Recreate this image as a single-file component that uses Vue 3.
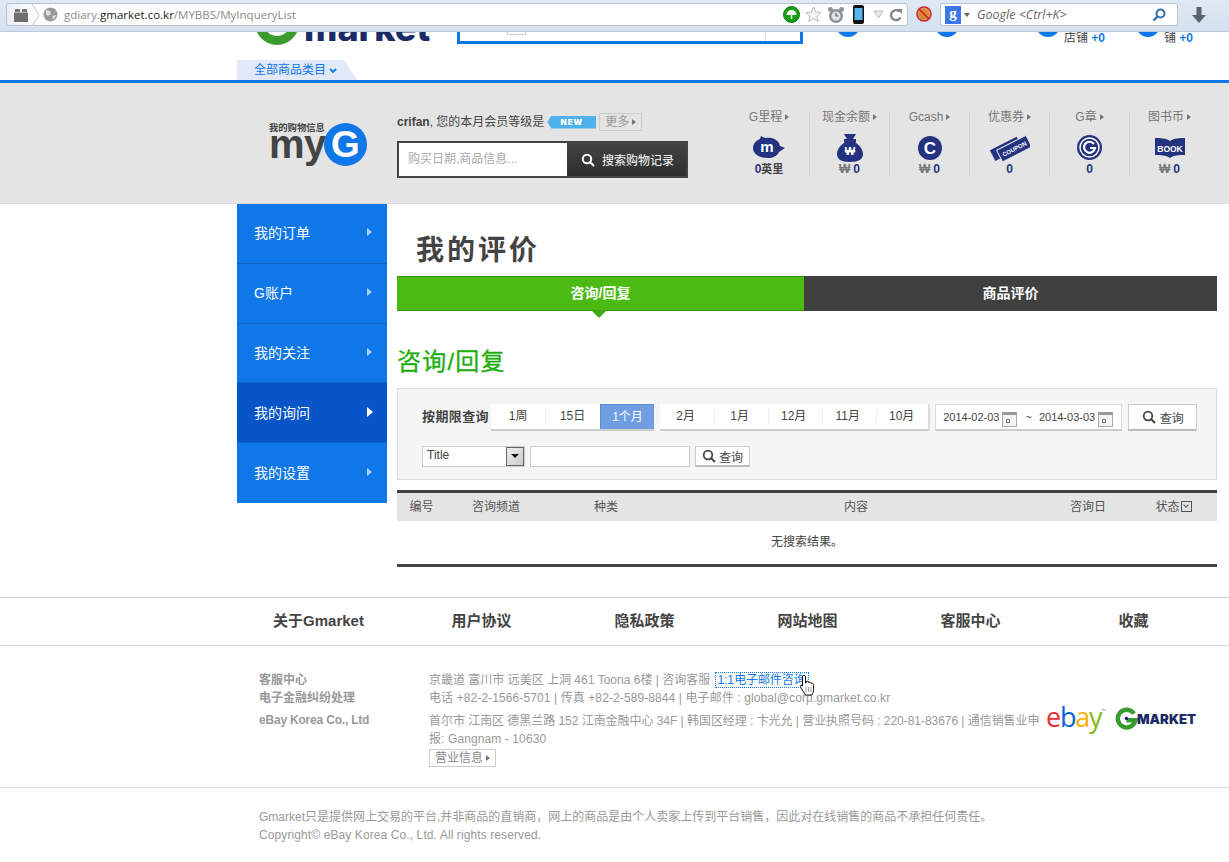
<script setup>
const menu = [
  { t: '我的订单' }, { t: 'G账户' }, { t: '我的关注' }, { t: '我的询问', on: true }, { t: '我的设置' }
]
const stats = [
  { t: 'G里程', k: 'pig', v: '0', u: '英里' },
  { t: '现金余额', k: 'bag', v: '0', p: '₩' },
  { t: 'Gcash', k: 'c', v: '0', p: '₩' },
  { t: '优惠券', k: 'coupon', v: '0' },
  { t: 'G章', k: 'g', v: '0' },
  { t: '图书币', k: 'book', v: '0', p: '₩' }
]
const links = ['关于Gmarket', '用户协议', '隐私政策', '网站地图', '客服中心', '收藏']
const p1 = ['1周', '15日', '1个月']
const p2 = ['2月', '1月', '12月', '11月', '10月']
</script>

<template>
  <div class="page">
    <div class="bar">
      <div class="url">
        <svg class="tabs" width="16" height="16" viewBox="0 0 16 16"><path d="M2 2h5v3H2zM9 2h5v3H9z" fill="#777"/><path d="M1 5.5h14V15H1z" fill="#6f6f6f"/></svg>
        <svg class="chev" width="10" height="24" viewBox="0 0 10 24"><path d="M1 1l7 11-7 11" fill="none" stroke="#c5ccd4"/></svg>
        <svg class="globe" width="15" height="15" viewBox="0 0 15 15"><circle cx="7.5" cy="7.5" r="7" fill="#9a9a9a"/><path d="M3 3l4 1 1 3-3 2-2-2zM9 9l4-1-2 5z" fill="#e0e0e0"/></svg>
        <span class="addr">gdiary.<b>gmarket.co.kr</b>/MYBBS/MyInqueryList</span>
        <span class="fill"></span>
        <svg width="17" height="17" viewBox="0 0 17 17"><circle cx="8.5" cy="8.5" r="8" fill="#16a016" stroke="#0c7a0c"/><path d="M3.5 9a5 5 0 0 1 10 0z" fill="#fff"/><path d="M8.5 9v4" stroke="#fff" stroke-width="1.5"/></svg>
        <svg class="i1" width="17" height="17" viewBox="0 0 17 17"><path d="M8.5 1l2.3 5 5.2.6-3.9 3.6 1.1 5.3-4.7-2.7-4.7 2.7L4.900 10.200 1 6.600 6.200 6z" fill="#f3f3f3" stroke="#bcbcbc"/></svg>
        <svg class="i2" width="18" height="18" viewBox="0 0 18 18"><circle cx="9" cy="10" r="7" fill="#8b949c"/><circle cx="9" cy="10" r="4.500" fill="#dfe3e6"/><path d="M9 7v3h2.500" fill="none" stroke="#5f666c" stroke-width="1.200"/><circle cx="3.500" cy="3.500" r="2.500" fill="#8b949c"/><circle cx="14.500" cy="3.500" r="2.500" fill="#8b949c"/></svg>
        <svg class="i3" width="11" height="19" viewBox="0 0 11 19"><rect width="11" height="19" rx="2" fill="#111"/><rect x="1.500" y="3" width="8" height="12" fill="#58b4ec"/></svg>
        <svg class="i4" width="11" height="9" viewBox="0 0 11 9"><path d="M1 1h9L5.500 8z" fill="#e8ebee" stroke="#b9bec3"/></svg>
        <svg class="i5" width="14" height="14" viewBox="0 0 14 14"><path d="M11.500 9.500A5 5 0 1 1 10.500 3.500" fill="none" stroke="#7d878f" stroke-width="2.400"/><path d="M8 1h5v5z" fill="#7d878f"/></svg>
      </div>
      <svg class="block" width="16" height="16" viewBox="0 0 16 16"><circle cx="8" cy="8" r="6" fill="#d98a35"/><circle cx="8" cy="8" r="7" fill="none" stroke="#cc2030" stroke-width="1.600"/><path d="M3 3l10 10" stroke="#cc2030" stroke-width="1.600"/></svg>
      <div class="search">
        <span class="gbox">g</span>
        <span class="caret"></span>
        <span class="hint">Google &lt;Ctrl+K&gt;</span>
        <span class="fill"></span>
        <svg width="14" height="14" viewBox="0 0 14 14"><circle cx="8.500" cy="5.500" r="4" fill="none" stroke="#2f6ea5" stroke-width="2"/><path d="M5.500 8.500L1.500 12.500" stroke="#2f6ea5" stroke-width="2.400"/></svg>
      </div>
      <svg class="down" width="14" height="16" viewBox="0 0 14 16"><path d="M4.500 0h5v8H14l-7 8-7-8h4.500z" fill="#5a636b"/></svg>
    </div>

    <div class="clip">
      <div class="glogo"><span class="garc"></span><span class="gword">market</span></div>
      <div class="topsearch"><span class="tsmall"></span><span class="tline"></span></div>
      <span class="dot d1"></span>
      <span class="dot d2"></span>
      <span class="dot d3"></span><span class="shop s3">店铺 <b>+0</b></span>
      <span class="dot d4"></span><span class="shop s4">铺 <b>+0</b></span>
    </div>
    <div class="catrow">
      <div class="cat">全部商品类目 <svg width="8" height="6" viewBox="0 0 8 6"><path d="M1 1l3 3 3-3" fill="none" stroke="#1077e8" stroke-width="1.800"/></svg></div>
    </div>

    <div class="band">
      <div class="mylogo">
        <span class="mysmall">我的购物信息</span>
        <div class="myword"><span>my</span><span class="myg">G</span></div>
      </div>
      <div class="userbox">
        <div class="uline">
          <b>crifan</b>, 您的本月会员等级是
          <span class="newb">NEW</span>
          <span class="more">更多<i class="tri gray"></i></span>
        </div>
        <div class="hist">
          <span class="ph">购买日期,商品信息...</span>
          <span class="hbtn">
            <svg width="14" height="14" viewBox="0 0 14 14"><circle cx="6" cy="6" r="4.200" fill="none" stroke="#fff" stroke-width="2"/><path d="M9 9l4 4" stroke="#fff" stroke-width="2.200"/></svg>
            搜索购物记录
          </span>
        </div>
      </div>
      <div class="stats">
        <div v-for="s in stats" :key="s.t" class="stat">
          <div class="st">{{ s.t }}<i class="tri gray"></i></div>
          <div class="si">
            <svg v-if="s.k === 'pig'" width="34" height="26" viewBox="0 0 34 26"><path d="M1 13c0-5 4-8 7-9l1-3 4 2c5-1 11 0 14 5l1 3 5 2-6 4c-2 4-6 6-11 6-9 0-15-4-15-10z" fill="#24337f"/><text x="15" y="17" class="svgm">m</text></svg>
            <svg v-else-if="s.k === 'bag'" width="26" height="28" viewBox="0 0 26 28"><path d="M7 0h12l-3 5h3v3h-1c4 3 8 7 8 12 0 5-4 8-13 8S0 25 0 20c0-5 4-9 8-12H7V5h3z" fill="#24337f"/><text x="13" y="21" class="svgw">₩</text></svg>
            <svg v-else-if="s.k === 'c'" width="24" height="24" viewBox="0 0 24 24"><circle cx="12" cy="12" r="12" fill="#24337f"/><text x="12" y="18" class="svgc">C</text></svg>
            <svg v-else-if="s.k === 'coupon'" width="40" height="28" viewBox="0 0 40 28"><g transform="rotate(-27 20 14)"><rect x="1" y="7" width="30" height="12" fill="#24337f"/><rect x="7" y="10" width="33" height="13" fill="#24337f" stroke="#e4e4e4"/><text x="23.500" y="19" class="svgt">COUPON</text></g></svg>
            <svg v-else-if="s.k === 'g'" width="25" height="25" viewBox="0 0 25 25"><circle cx="12.500" cy="12.500" r="12.500" fill="#24337f"/><circle cx="12.500" cy="12.500" r="9.500" fill="none" stroke="#fff" stroke-width="1.500"/><path d="M17 9a5.500 5.500 0 1 0 1 4h-5" fill="none" stroke="#fff" stroke-width="2.200"/></svg>
            <svg v-else width="30" height="22" viewBox="0 0 30 22"><path d="M0 1c5 0 11 0 15 3 4-3 10-3 15-3v17c-5 0-11 0-15 3-4-3-10-3-15-3z" fill="#24337f"/><text x="15" y="14.500" class="svgb">BOOK</text></svg>
          </div>
          <div class="sv"><span v-if="s.p" class="won">{{ s.p }}</span><b>{{ s.v }}</b><span v-if="s.u" class="unit">{{ s.u }}</span></div>
        </div>
      </div>
    </div>

    <div class="main">
      <nav class="side">
        <a v-for="m in menu" :key="m.t" class="mi" :class="{ on: m.on }">{{ m.t }}<i class="tri"></i></a>
      </nav>
      <section class="content">
        <h1>我的评价</h1>
        <div class="tabsrow">
          <div class="tab act">咨询/回复</div>
          <div class="tab">商品评价</div>
        </div>
        <h2>咨询/回复</h2>
        <div class="filter">
          <div class="frow">
            <b class="flabel">按期限查询</b>
            <div class="seg">
              <span v-for="x in p1" :key="x" class="sitem" :class="{ sel: x === '1个月' }">{{ x }}</span>
            </div>
            <div class="seg g2">
              <span v-for="x in p2" :key="x" class="sitem">{{ x }}</span>
            </div>
            <div class="dates">
              2014-02-03<i class="cal"></i><span class="til">~</span>2014-03-03<i class="cal"></i>
            </div>
            <button class="qbtn big">
              <svg width="14" height="14" viewBox="0 0 14 14"><circle cx="6" cy="6" r="4.300" fill="none" stroke="#444" stroke-width="1.800"/><path d="M9 9l4 4" stroke="#444" stroke-width="2"/></svg>
              查询
            </button>
          </div>
          <div class="frow r2">
            <div class="sel2"><span>Title</span><i class="ddb"></i></div>
            <div class="inp"></div>
            <button class="qbtn small">
              <svg width="14" height="14" viewBox="0 0 14 14"><circle cx="6" cy="6" r="4.300" fill="none" stroke="#444" stroke-width="1.800"/><path d="M9 9l4 4" stroke="#444" stroke-width="2"/></svg>
              查询
            </button>
          </div>
        </div>
        <div class="tbl">
          <div class="thead">
            <span>编号</span><span>咨询频道</span><span>种类</span><span>内容</span><span>咨询日</span>
            <span>状态<i class="chk"></i></span>
          </div>
          <div class="empty">无搜索结果。</div>
        </div>
      </section>
    </div>

    <div class="flinks">
      <a v-for="l in links" :key="l">{{ l }}</a>
    </div>
    <div class="finfo">
      <div class="fleft">
        <div class="lh18">客服中心<br>电子金融纠纷处理</div>
        <div class="co">eBay Korea Co., Ltd</div>
      </div>
      <div class="fright">
        <div class="lh18">京畿道 富川市 远美区 上洞 461 Toona 6楼 | 咨询客服 <a class="mail">1:1 电子邮件咨询</a><br><span class="wide">电话 +82-2-1566-5701 | 传真 +82-2-589-8844 | 电子邮件 : global@corp.gmarket.co.kr</span></div>
        <div class="lh18 second"><span class="tight">首尔市 江南区 德黑兰路 152 江南金融中心 34F | 韩国区经理 : 卞光允 | 营业执照号码 : 220-81-83676 | 通信销售业申</span><br><span class="wide">报: Gangnam - 10630</span></div>
        <span class="biz">营业信息<i class="tri gray"></i></span>
      </div>
      <div class="brand">
        <span class="ebay"><i class="e1">e</i><i class="e2">b</i><i class="e3">a</i><i class="e4">y</i><i class="tm">™</i></span>
        <span class="gm2">
          <svg width="23" height="23" viewBox="0 0 26 26"><path d="M21.500 7.500A10 10 0 1 0 23 15H13" fill="none" stroke="#3a9b2f" stroke-width="5"/><circle cx="13" cy="13" r="2" fill="#1b2a66"/></svg>
          <span>MARKET</span>
        </span>
      </div>
      <svg class="hand" width="16" height="23" viewBox="0 0 16 23"><path d="M5 1.500c1 0 1.500.7 1.500 1.500v6l1-.3V7.500c1.300-.5 2 0 2 1l.8-.2c1.200-.3 1.700.3 1.700 1l.8-.1c1-.1 1.700.5 1.700 1.500v5c0 2-.5 3-1.500 5.300H6.500L2 14c-1.500-2-.5-3 1-2.500l.5.700V3c0-1 .5-1.500 1.500-1.500z" fill="#fff" stroke="#111"/><path d="M7 13v5M9.500 13v5M12 13v5" stroke="#888" stroke-width=".8"/></svg>
    </div>
    <div class="fbottom">
      Gmarket只是提供网上交易的平台,并非商品的直销商，网上的商品是由个人卖家上传到平台销售，因此对在线销售的商品不承担任何责任。<br>
      <span class="wide">Copyright© eBay Korea Co., Ltd. All rights reserved.</span>
    </div>
  </div>
</template>

<style>
html, body { margin: 0; background: #fff; overflow: hidden; }
</style>

<style scoped>
.page { width: 1229px; height: 862px; overflow: hidden; position: relative; font-family: "Liberation Sans", "Noto Sans CJK SC", sans-serif; font-size: 12px; color: #444; background: #fff; }
i { font-style: normal; }
b { font-weight: bold; }
.fill { flex: 1; }

.bar { height: 32px; box-sizing: border-box; display: flex; align-items: flex-start; padding: 3px 0 0 6px; background: linear-gradient(#dfe9f4, #d5e1ef); border-bottom: 1px solid #b9c8da; }
.url { width: 902px; height: 23px; box-sizing: border-box; background: #fff; border: 1px solid #b8c4d2; border-radius: 3px; display: flex; align-items: center; padding: 0 4px 0 6px; background-image: linear-gradient(90deg, #e9eef4, #fff 32px); }
.chev { margin-left: 2px; }
.globe { margin-left: 2px; }
.addr { margin-left: 6px; font-family: "Open Sans", "Liberation Sans", sans-serif; font-size: 11.500px; color: #8a8a8a; }
.addr b { font-weight: normal; color: #222; }
.i1 { margin-left: 5px; } .i2 { margin-left: 5px; } .i3 { margin-left: 8px; } .i4 { margin-left: 9px; } .i5 { margin-left: 5px; }
.block { margin: 3px 0 0 8px; }
.search { width: 238px; height: 23px; margin-left: 8px; box-sizing: border-box; background: #fff; border: 1px solid #b8c4d2; border-radius: 3px; display: flex; align-items: center; padding: 0 11px 0 4px; }
.gbox { width: 16px; height: 18px; background: #3b78e7; color: #fff; font: bold 15px/15px "Liberation Serif", serif; text-align: center; }
.caret { width: 0; height: 0; border: 3px solid transparent; border-top: 4px solid #666; margin: 3px 0 0 3px; }
.hint { margin-left: 7px; font: italic 12.500px "Open Sans", sans-serif; color: #666; }
.down { margin: 4px 0 0 14px; }

.clip { height: 13px; overflow: hidden; display: flex; align-items: flex-end; padding-left: 255px; position: relative; }
.glogo { display: flex; align-items: flex-end; height: 60px; flex: none; width: 202px; }
.garc { width: 44px; height: 44px; box-sizing: border-box; border: 9px solid #3a9b2f; border-radius: 50%; flex: none; }
.gword { font: 800 36px/40px Inter, sans-serif; color: #1b2a66; margin: 0 0 -3px 5px; }
.topsearch { width: 346px; height: 40px; box-sizing: border-box; border: 3px solid #1077e8; margin-bottom: 1px; flex: none; position: relative; }
.tsmall { display: block; width: 19px; height: 4px; position: absolute; left: 47px; bottom: 6px; border: 1px solid #ccd; border-top: 0; box-sizing: border-box; }
.tline { position: absolute; right: 34px; top: 0; bottom: 0; width: 1px; background: #ddd; }
.dot { position: absolute; width: 24px; height: 24px; border-radius: 50%; background: #1077e8; bottom: 8px; }
.d1 { left: 836px; } .d2 { left: 935px; } .d3 { left: 1036px; } .d4 { left: 1136px; }
.shop { position: absolute; bottom: 0; font-size: 12px; line-height: 14px; color: #444; }
.shop b { color: #1077e8; font-size: 12px; }
.s3 { left: 1064px; } .s4 { left: 1164px; }

.catrow { height: 20px; margin-top: 15px; padding-left: 237px; border-bottom: 3px solid #0f77e8; }
.cat { width: 120px; height: 20px; box-sizing: border-box; background: #e1e8f8; padding-left: 17px; font-size: 12px; line-height: 20px; color: #1077e8; clip-path: polygon(0 0, 107px 0, 120px 100%, 0 100%); }

.band { height: 120px; background: #e4e4e4; border-bottom: 1px solid #ddd; display: flex; padding-left: 269px; }
.mylogo { width: 128px; padding-top: 39px; flex: none; }
.mysmall { display: block; font-size: 9.300px; line-height: 12px; font-weight: bold; color: #444; }
.myword { display: flex; align-items: center; margin-top: -10px; height: 40px; font: bold 40px/40px "Liberation Sans", sans-serif; color: #444; letter-spacing: -.5px; }
.myg { width: 43px; height: 43px; border-radius: 50%; background: #1077e8; color: #fff; font: bold 37px/43px "Liberation Sans", sans-serif; text-align: center; margin-left: -2px; flex: none; letter-spacing: 0; }
.userbox { width: 291px; flex: none; padding-top: 30px; }
.uline { height: 18px; line-height: 18px; display: flex; align-items: center; white-space: nowrap; color: #444; }
.newb { width: 49px; height: 13px; flex: none; background: #4db2ec; color: #fff; font: 900 8px/13px Inter, sans-serif; letter-spacing: 1px; text-align: center; margin-left: 3px; clip-path: polygon(0 50%, 4px 0, 100% 0, 100% 100%, 4px 100%); }
.more { width: 43px; height: 18px; flex: none; box-sizing: border-box; border: 1px solid #ccc; margin-left: 3px; color: #999; font-size: 12px; line-height: 16px; text-align: center; }
.hist { margin-top: 10px; height: 37px; box-sizing: border-box; border: 2px solid #444; display: flex; background: #fff; }
.ph { width: 168px; padding-left: 9px; box-sizing: border-box; font-size: 12px; line-height: 33px; color: #aaa; flex: none; }
.hbtn { flex: 1; background: linear-gradient(#444, #2e2e2e); color: #fff; display: flex; align-items: center; gap: 7px; padding-left: 14px; font-size: 12px; }
.stats { display: flex; width: 480px; flex: none; margin-left: 41px; padding-top: 30px; height: 63px; }
.stat { width: 80px; height: 63px; flex: none; box-sizing: border-box; border-left: 1px solid #d4d4d4; text-align: center; display: flex; flex-direction: column; align-items: center; }
.stat:first-child { border-left: 0; }
.st { font-size: 12px; line-height: 14px; margin-top: -3px; color: #777; white-space: nowrap; height: 14px; }
.si { height: 34px; display: flex; align-items: center; justify-content: center; margin-top: 9px; }
.sv { font-size: 12px; line-height: 14px; color: #24337f; }
.won { color: #777; font-weight: bold; margin-right: 3px; }
.unit { color: #444; font-weight: bold; font-size: 11px; }
.svgm { font: bold 15px "Liberation Sans", sans-serif; fill: #fff; text-anchor: middle; }
.svgw { font: bold 11px "Liberation Sans", "DejaVu Sans", sans-serif; fill: #fff; text-anchor: middle; }
.svgc { font: bold 17px "Liberation Sans", sans-serif; fill: #fff; text-anchor: middle; }
.svgt { font: bold 6px "Liberation Sans", sans-serif; fill: #fff; text-anchor: middle; }
.svgb { font: bold 8.500px "Liberation Sans", sans-serif; fill: #fff; text-anchor: middle; }
.tri { display: inline-block; width: 0; height: 0; border: 4px solid transparent; border-left: 5px solid #aecdf5; border-right: 0; vertical-align: 1px; }
.tri.gray { border-width: 3px; border-left: 4px solid #777; border-right: 0; margin-left: 3px; }

.main { height: 393px; display: flex; padding-left: 237px; }
.side { width: 150px; height: 299px; flex: none; background: #1077e8; display: flex; flex-direction: column; }
.mi { height: 60px; box-sizing: border-box; border-bottom: 1px solid #0b63c9; color: #fff; font-size: 14px; padding: 0 15px 2px 17px; display: flex; justify-content: space-between; align-items: center; }
.mi:last-child { border-bottom: 0; }
.mi.on { background: #0755c8; }
.mi.on .tri { border-width: 5px; border-left: 6px solid #fff; border-right: 0; margin-right: -1px; }
.content { width: 820px; margin-left: 10px; flex: none; }
h1 { margin: 0; padding: 31px 0 0 19px; height: 72px; box-sizing: border-box; font: bold 28px/32px "Liberation Sans", "Noto Sans CJK SC", sans-serif; letter-spacing: 3px; color: #444; }
.tabsrow { display: flex; height: 35px; }
.tab { width: 413px; box-sizing: border-box; background: #404040; color: #fff; font-size: 14px; font-weight: bold; line-height: 35px; text-align: center; }
.tab.act { width: 407px; background: #4bbb14; border: 1px solid #2d9a05; border-width: 1px 0; line-height: 33px; position: relative; }
.tab.act::after { content: ""; position: absolute; left: 194px; top: 33px; width: 0; height: 0; border: 8px solid transparent; border-top: 8px solid #3ea80f; border-bottom: 0; }
h2 { margin: 0; padding-top: 35px; height: 77px; box-sizing: border-box; font: normal 24px/32px "Liberation Sans", "Noto Sans CJK SC", sans-serif; letter-spacing: 1.200px; color: #1fae12; -webkit-text-stroke: .3px #1fae12; }
.filter { height: 92px; box-sizing: border-box; background: #f5f5f5; border: 1px solid #ddd; padding: 15px 0 0 24px; }
.frow { display: flex; height: 27px; align-items: stretch; }
.flabel { width: 69px; font-size: 13px; letter-spacing: .4px; line-height: 25px; color: #444; flex: none; white-space: nowrap; }
.seg { display: flex; background: #fff; border-bottom: 2px solid #ccc; box-sizing: border-box; flex: none; }
.g2 { margin-left: 6px; width: 270px; border-right: 2px solid #ddd; }
.sitem { width: 54.400px; flex: none; text-align: center; line-height: 25px; position: relative; color: #444; }
.g2 .sitem { width: 54px; text-indent: -3px; }
.sitem + .sitem::before { content: ""; position: absolute; left: 0; top: 5px; height: 15px; width: 1px; background: #eee; }
.sitem.sel { background: #709ee2; color: #fff; border-top: 1px solid #5f8ed6; border-left: 1px solid #5f8ed6; box-sizing: border-box; line-height: 24px; }
.sitem.sel::before { display: none; }
.dates { margin-left: 5px; width: 187px; flex: none; box-sizing: border-box; background: #fff; border: 1px solid #ddd; border-bottom: 2px solid #ccc; padding-left: 7px; display: flex; align-items: center; font-size: 11px; color: #444; white-space: nowrap; }
.til { margin: 0 7px 0 8px; }
.cal { width: 15px; height: 15px; box-sizing: border-box; border: 1px solid #aaa; border-top: 3px solid #999; margin: 4px 0 0 3px; background: #f4f4f4; flex: none; position: relative; }
.cal::after { content: ""; position: absolute; left: 3px; top: 4px; width: 2px; height: 2px; border: 1px solid #888; }
.qbtn { padding: 0; box-sizing: border-box; background: #fff; border: 1px solid #ccc; border-bottom: 2px solid #bbb; color: #444; font-family: inherit; font-size: 12px; display: flex; align-items: center; justify-content: center; gap: 3px; }
.big { width: 69px; margin-left: 6px; gap: 4px; }
.r2 { margin-top: 15px; height: 21px; }
.sel2 { width: 103px; box-sizing: border-box; background: #fff; border: 1px solid #ccc; position: relative; padding-left: 4px; line-height: 16px; color: #444; }
.ddb { position: absolute; right: 0; top: 0; width: 18px; height: 19px; box-sizing: border-box; border: 1px solid #666; background: linear-gradient(135deg, #eee, #ccc); }
.ddb::after { content: ""; position: absolute; left: 4px; top: 6px; width: 0; height: 0; border: 4px solid transparent; border-top: 4px solid #111; border-bottom: 0; }
.inp { width: 160px; margin-left: 5px; box-sizing: border-box; background: #fff; border: 1px solid #ccc; }
.small { width: 55px; margin-left: 5px; }
.tbl { margin-top: 10px; border-top: 3px solid #404040; border-bottom: 3px solid #444; height: 77px; box-sizing: border-box; }
.thead { height: 28px; background: #e4e4e4; display: grid; grid-template-columns: 49px 100px 120px 380px 84px 87px; line-height: 28px; text-align: center; color: #555; }
.chk { display: inline-block; width: 9px; height: 9px; border: 1px solid #555; margin-left: 1px; vertical-align: -1px; position: relative; }
.chk::after { content: ""; position: absolute; left: 2px; top: 1px; width: 3px; height: 3px; border: solid #555; border-width: 0 1px 1px 0; transform: rotate(45deg); }
.empty { text-align: center; line-height: 43px; color: #444; }

.flinks { height: 49px; box-sizing: border-box; border-top: 1px solid #ccc; border-bottom: 1px solid #ddd; padding-left: 237px; display: flex; }
.flinks a { width: 163px; text-align: center; font-size: 15px; font-weight: bold; line-height: 45px; color: #444; }
.finfo { height: 142px; box-sizing: border-box; border-bottom: 1px solid #ddd; padding: 25px 0 0 259px; display: flex; position: relative; color: #999; }
.lh18 { line-height: 18px; }
.fleft { width: 170px; font-weight: bold; flex: none; }
.co { margin-top: 4px; line-height: 18px; letter-spacing: -.2px; }
.fright { width: 630px; flex: none; white-space: nowrap; }
.wide { letter-spacing: .1px; }
.tight { letter-spacing: -.04px; }
.mail { color: #1077e8; outline: 1px dotted #1077e8; padding: 0 2px; margin-left: 2px; word-spacing: -3px; letter-spacing: -.1px; }
.second { margin-top: 5px; }
.biz { display: inline-block; width: 67px; height: 18px; box-sizing: border-box; border: 1px solid #ccc; margin-top: 1px; line-height: 16px; text-align: center; color: #888; }
.brand { position: absolute; left: 1046px; top: 60px; display: flex; align-items: center; gap: 9px; }
.ebay { font: 500 27px/28px "Open Sans", sans-serif; letter-spacing: -1.200px; display: flex; width: 60px; margin-top: -3px; }
.e1 { color: #e53238; } .e2 { color: #0064d2; } .e3 { color: #f5af02; } .e4 { color: #86b817; }
.tm { font-size: 6px; line-height: 16px; color: #999; letter-spacing: 0; }
.gm2 { display: flex; align-items: center; font: 900 13.200px/20px Inter, sans-serif; color: #1b2a66; }
.gm2 span { margin-left: -1px; }
.hand { position: absolute; left: 799px; top: 28px; }
.fbottom { padding: 20px 0 0 259px; line-height: 18px; color: #999; white-space: nowrap; }
</style>
